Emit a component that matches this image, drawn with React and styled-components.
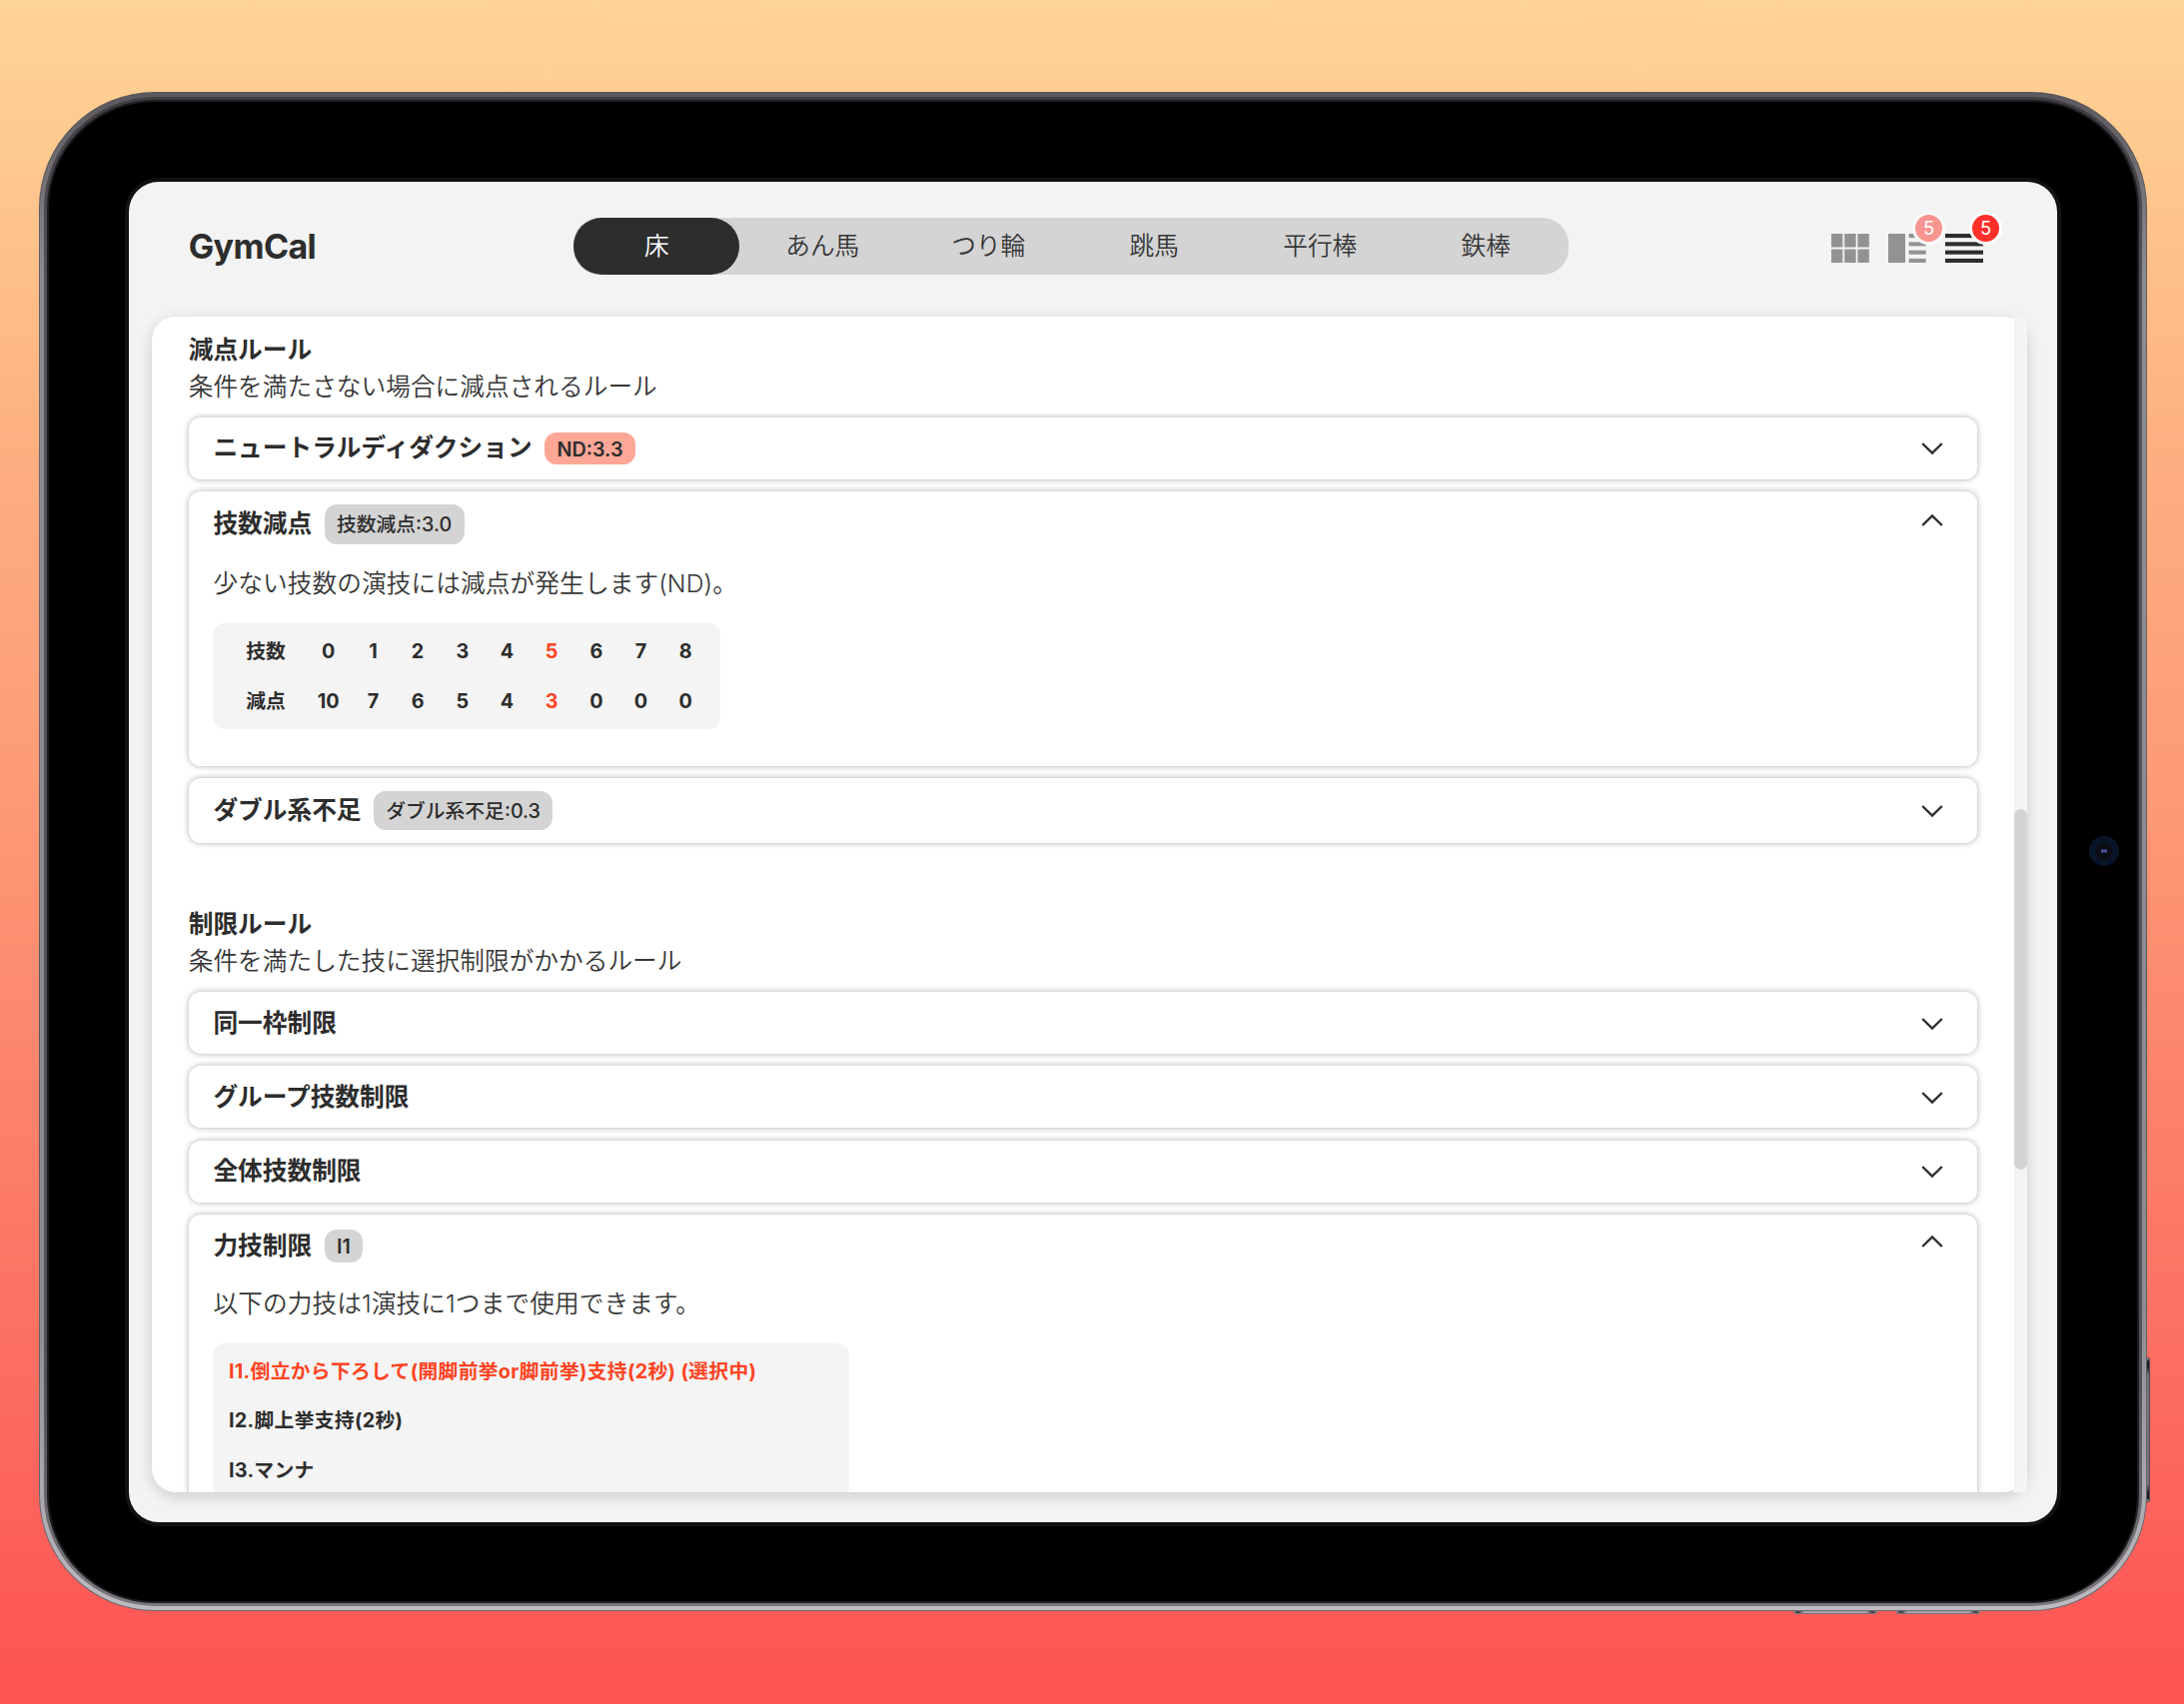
import React from "react";
import styled, { createGlobalStyle } from "styled-components";

const INK = "#2d2d2d";
const FONT = `Inter, "Noto Sans CJK JP", sans-serif`;

const GlobalStyle = createGlobalStyle`
  * { box-sizing: border-box; }
  body { margin: 0; }
`;

const Stage = styled.main`
  position: relative;
  width: 2186px;
  height: 1706px;
  padding: 92.4px 37.4px 93.4px 39.4px;
  overflow: hidden;
  background: linear-gradient(180deg, #ffd497 0%, #fecb90 8%, #fdae80 27%, #fd9b77 46%, #fc7b67 70%, #fc6c60 82%, #fd5a57 94%, #fd5452 100%);
  color: ${INK};
  font-family: ${FONT};
`;

const SideButton = styled.div`
  position: absolute;
  left: ${(p) => p.$x}px;
  top: ${(p) => p.$y}px;
  width: ${(p) => p.$w}px;
  height: ${(p) => p.$h}px;
  border-radius: 2px;
  border: 1px solid ${(p) => p.$edge};
  background: linear-gradient(${(p) => p.$angle}deg, #aaa 0%, ${(p) => p.$cap} 2%, ${(p) => p.$cap} 6%, ${(p) => p.$face} 12%, ${(p) => p.$face} 88%, ${(p) => p.$cap} 94%, ${(p) => p.$cap} 98%, #aaa 100%);
`;

const Rim = styled.div`
  position: relative;
  width: 100%;
  height: 100%;
  padding: 1px;
  border-radius: 116px;
  background: linear-gradient(180deg, #58575a 0%, #6c6a6f 30%, #58565a 60%, #6b696e 100%);
`;

const RimLight = styled.div`
  height: 100%;
  padding: 4px;
  border-radius: 115px;
  background: linear-gradient(180deg, #5b595e 0%, #8d8b90 12%, #8d8b90 80%, #bdbac0 100%);
`;

const RimShade = styled.div`
  height: 100%;
  padding: 3px;
  border-radius: 111px;
  background: linear-gradient(180deg, #3f3d41 0%, #545257 12%, #545257 85%, #79777c 100%);
`;

const RimDark = styled.div`
  height: 100%;
  padding: 2px;
  border-radius: 108px;
  background: #1d1c1e;
`;

const Bezel = styled.div`
  height: 100%;
  padding: 75.6px 76px 75px 76px;
  border-radius: 106px;
  background: #000;
`;

const Camera = styled.div`
  position: absolute;
  right: 27.5px;
  top: 745px;
  width: 30px;
  height: 30px;
  border-radius: 50%;
  background: radial-gradient(circle, #0d0e14 0 8px, #081427 9px 100%);
  display: flex;
  align-items: center;
  justify-content: center;
`;

const Lens = styled.i`
  width: 3px;
  height: 4px;
  border-radius: 50%;
  background: #4a52a8;
`;

const ScreenEdge = styled.div`
  height: 100%;
  padding: 4px;
  border-radius: 34px;
  background: #111;
`;

const Screen = styled.div`
  display: flex;
  flex-direction: column;
  height: 100%;
  padding: 0 30px 29.6px 22.3px;
  border-radius: 30px;
  overflow: hidden;
  background: #f3f3f3;
`;

const Header = styled.header`
  display: grid;
  grid-template-columns: 385.6px 996px 1fr;
  flex: none;
  height: 134.7px;
  padding: 36px 0 0 37px;
`;

const Logo = styled.h1`
  margin: 0;
  font-size: 34px;
  font-weight: 700;
  line-height: 58px;
  letter-spacing: -0.6px;
`;

const Tabs = styled.nav`
  display: grid;
  grid-template-columns: repeat(6, 166px);
  width: 996px;
  height: 56.7px;
  border-radius: 26px;
  background: #d4d4d4;
`;

const Tab = styled.div`
  height: 56.7px;
  border-radius: 28.4px;
  background: ${(p) => (p.$active ? INK : "transparent")};
  color: ${(p) => (p.$active ? "#fff" : "#363636")};
  font-size: 24.7px;
  font-weight: 350;
  line-height: 57px;
  text-align: center;
`;

const Views = styled.div`
  display: flex;
  justify-content: flex-end;
  gap: 19px;
  padding: 16px 43.4px 0 0;
`;

const ViewButton = styled.div`
  position: relative;
  width: 38px;
  height: 29px;
  color: ${(p) => (p.$active ? INK : "#929292")};
  svg { display: block; }
`;

const Count = styled.span`
  position: absolute;
  right: -19px;
  top: -22px;
  width: 33px;
  height: 33px;
  border: 3px solid ${(p) => (p.$active ? "#fff" : "#f9f9f9")};
  border-radius: 50%;
  background: ${(p) => (p.$active ? "#ff2f2a" : "#f99590")};
  color: #fff;
  font-size: 18.5px;
  font-weight: 400;
  line-height: 27px;
  text-align: center;
`;

const Panel = styled.section`
  display: flex;
  flex: none;
  width: 1877.5px;
  height: 1177px;
  border-radius: 24px;
  background: #fff;
  box-shadow: 0 4px 15px rgba(0, 0, 0, 0.16);
`;

const Content = styled.div`
  flex: 1;
  padding: 15px 37px 0 37px;
  border-radius: 24px 0 0 24px;
  overflow: hidden;
`;

const Track = styled.div`
  width: 13px;
  padding-top: 493px;
  background: #f4f4f4;
`;

const Thumb = styled.div`
  height: 361px;
  border-radius: 6.5px;
  background: #d4d4d4;
`;

const Group = styled.section`
  margin-bottom: ${(p) => p.$after || 0}px;
`;

const GroupTitle = styled.h2`
  margin: 0;
  font-size: 24.7px;
  font-weight: 600;
  line-height: 37px;
`;

const GroupNote = styled.p`
  margin: 0 0 12.3px;
  color: #363636;
  font-size: 24.7px;
  font-weight: 350;
  line-height: 37px;
`;

const Cards = styled.div`
  display: flex;
  flex-direction: column;
  gap: 12.4px;
`;

const Card = styled.article`
  min-height: 62px;
  height: ${(p) => (p.$h ? `${p.$h}px` : "auto")};
  padding: 0 24.7px;
  border-radius: 12px;
  background: #fff;
  box-shadow: 0 0 6px rgba(0, 0, 0, 0.32);
`;

const CardHead = styled.div`
  display: flex;
  align-items: center;
  gap: 12.4px;
  height: ${(p) => p.$h}px;
`;

const CardTitle = styled.h3`
  margin: 0;
  font-size: 24.7px;
  font-weight: 600;
  line-height: 37px;
`;

const Chip = styled.span`
  height: ${(p) => (p.$tall ? 39.3 : 32.8)}px;
  padding: 0 12.4px;
  border-radius: 12px;
  background: ${(p) => (p.$warn ? "#ffa796" : "#d4d4d4")};
  font-size: 19.77px;
  font-weight: ${(p) => (p.$tall ? 500 : 600)};
  line-height: ${(p) => (p.$tall ? 40 : 34)}px;
  white-space: nowrap;
`;

const Arrow = styled.svg`
  display: block;
  margin: ${(p) => (p.$up ? "-8px" : "1px")} 9.4px 0 auto;
`;

const Body = styled.p`
  margin: ${(p) => p.$top}px 0 0;
  color: #363636;
  font-size: 24.7px;
  font-weight: 350;
  letter-spacing: 0.08px;
  line-height: 37px;
`;

const Table = styled.div`
  display: grid;
  grid-template-columns: 80.8px repeat(9, 44.7px);
  width: 507.4px;
  margin-top: 21px;
  padding: 4px 12.2px 3px;
  border-radius: 12px;
  background: #f4f4f4;
`;

const Cell = styled.span`
  color: ${(p) => (p.$hot ? "#ff4422" : INK)};
  font-size: 19.77px;
  font-weight: ${(p) => (p.$label ? 600 : 700)};
  line-height: 49.4px;
  text-align: center;
`;

const List = styled.ul`
  width: 636.6px;
  margin: 20.8px 0 0;
  padding: 4px 15.5px;
  border-radius: 12px;
  background: #f4f4f4;
  list-style: none;
`;

const Item = styled.li`
  color: ${(p) => (p.$hot ? "#ff4422" : INK)};
  font-size: 19.77px;
  font-weight: 700;
  letter-spacing: 0.33px;
  line-height: 49.4px;
  white-space: nowrap;
`;

function Chevron({ up }) {
  return (
    <Arrow $up={up} width="22" height="14" viewBox="0 0 22 14" fill="none" stroke={INK} strokeWidth="2.4">
      <path d={up ? "M1.2 12 11 2.4 20.8 12" : "M1.2 2 11 11.6 20.8 2"} />
    </Arrow>
  );
}

function GridIcon() {
  return (
    <svg width="38" height="29" fill="currentColor">
      {[0, 15.5].map((y) =>
        [0, 13.2, 26.4].map((x) => <rect key={`${x}-${y}`} x={x} y={y} width="11.4" height="13.5" />)
      )}
    </svg>
  );
}

function SplitIcon() {
  return (
    <svg width="38" height="29" fill="currentColor">
      <rect width="17" height="29" />
      {[0, 8.3, 16.6, 24.9].map((y) => <rect key={y} x="20.7" y={y} width="17" height="4.1" />)}
    </svg>
  );
}

function ListIcon() {
  return (
    <svg width="38" height="29" fill="currentColor">
      {[0, 8.3, 16.6, 24.9].map((y) => <rect key={y} y={y} width="38" height="4.1" />)}
    </svg>
  );
}

const tabs = ["床", "あん馬", "つり輪", "跳馬", "平行棒", "鉄棒"];
const rows = [
  ["技数", 0, 1, 2, 3, 4, 5, 6, 7, 8],
  ["減点", 10, 7, 6, 5, 4, 3, 0, 0, 0],
];
const strengthSkills = [
  "I1.倒立から下ろして(開脚前挙or脚前挙)支持(2秒) (選択中)",
  "I2.脚上挙支持(2秒)",
  "I3.マンナ",
];

function ClosedCard({ title, h = 62, children }) {
  return (
    <Card $h={h}>
      <CardHead $h={h}>
        <CardTitle>{title}</CardTitle>
        {children}
        <Chevron />
      </CardHead>
    </Card>
  );
}

export default function App() {
  return (
    <Stage lang="ja">
      <GlobalStyle />
      <SideButton $x={2144} $y={1359} $w={8} $h={145} $angle={180} $edge="#4a484c" $cap="#1c1a1e" $face="#77757a" />
      <SideButton $x={1795} $y={1608} $w={84} $h={8} $angle={90} $edge="#77757a" $cap="#4a484c" $face="#a5a3a8" />
      <SideButton $x={1898} $y={1608} $w={84} $h={8} $angle={90} $edge="#77757a" $cap="#4a484c" $face="#a5a3a8" />
      <Rim>
        <RimLight>
          <RimShade>
            <RimDark>
              <Bezel>
                <ScreenEdge>
                  <Screen>
                    <Header>
                      <Logo>GymCal</Logo>
                      <Tabs>
                        {tabs.map((name, i) => <Tab key={name} $active={i === 0}>{name}</Tab>)}
                      </Tabs>
                      <Views>
                        <ViewButton><GridIcon /></ViewButton>
                        <ViewButton><SplitIcon /><Count>5</Count></ViewButton>
                        <ViewButton $active><ListIcon /><Count $active>5</Count></ViewButton>
                      </Views>
                    </Header>
                    <Panel>
                      <Content>
                        <Group $after={62.4}>
                          <GroupTitle>減点ルール</GroupTitle>
                          <GroupNote>条件を満たさない場合に減点されるルール</GroupNote>
                          <Cards>
                            <ClosedCard title="ニュートラルディダクション"><Chip $warn>ND:3.3</Chip></ClosedCard>
                            <Card $h={274.6}>
                              <CardHead $h={65}>
                                <CardTitle>技数減点</CardTitle>
                                <Chip $tall>技数減点:3.0</Chip>
                                <Chevron up />
                              </CardHead>
                              <Body $top={9}>少ない技数の演技には減点が発生します(ND)。</Body>
                              <Table>
                                {rows.map((row) =>
                                  row.map((v, i) => (
                                    <Cell key={`${row[0]}-${i}`} $label={i === 0} $hot={i === 6}>{v}</Cell>
                                  ))
                                )}
                              </Table>
                            </Card>
                            <ClosedCard title="ダブル系不足" h={65}><Chip $tall>ダブル系不足:0.3</Chip></ClosedCard>
                          </Cards>
                        </Group>
                        <Group>
                          <GroupTitle>制限ルール</GroupTitle>
                          <GroupNote>条件を満たした技に選択制限がかかるルール</GroupNote>
                          <Cards>
                            <ClosedCard title="同一枠制限" />
                            <ClosedCard title="グループ技数制限" />
                            <ClosedCard title="全体技数制限" />
                            <Card $h={420}>
                              <CardHead $h={62}>
                                <CardTitle>力技制限</CardTitle>
                                <Chip>I1</Chip>
                                <Chevron up />
                              </CardHead>
                              <Body $top={9}>以下の力技は1演技に1つまで使用できます。</Body>
                              <List>
                                {strengthSkills.map((s, i) => <Item key={s} $hot={i === 0}>{s}</Item>)}
                              </List>
                            </Card>
                          </Cards>
                        </Group>
                      </Content>
                      <Track><Thumb /></Track>
                    </Panel>
                  </Screen>
                </ScreenEdge>
              </Bezel>
            </RimDark>
          </RimShade>
        </RimLight>
        <Camera><Lens /><Lens /></Camera>
      </Rim>
    </Stage>
  );
}
